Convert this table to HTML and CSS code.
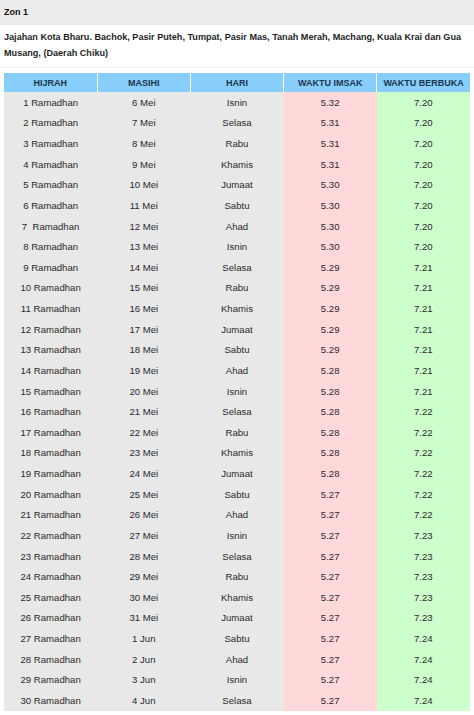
FILE: index.html
```html
<!DOCTYPE html>
<html>
<head>
<meta charset="utf-8">
<link rel="stylesheet" href="styles.css">
</head>
<body>
<div class="zone-title">Zon 1</div>
<div class="zone-desc">Jajahan Kota Bharu. Bachok, Pasir Puteh, Tumpat, Pasir Mas, Tanah Merah, Machang, Kuala Krai dan Gua Musang, (Daerah Chiku)</div>
<table class="jadual">
<thead>
<tr><th>HIJRAH</th><th>MASIHI</th><th>HARI</th><th>WAKTU IMSAK</th><th>WAKTU BERBUKA</th></tr>
</thead>
<tbody>
<tr><td>1 Ramadhan</td><td>6 Mei</td><td>Isnin</td><td class="imsak">5.32</td><td class="buka">7.20</td></tr>
<tr><td>2 Ramadhan</td><td>7 Mei</td><td>Selasa</td><td class="imsak">5.31</td><td class="buka">7.20</td></tr>
<tr><td>3 Ramadhan</td><td>8 Mei</td><td>Rabu</td><td class="imsak">5.31</td><td class="buka">7.20</td></tr>
<tr><td>4 Ramadhan</td><td>9 Mei</td><td>Khamis</td><td class="imsak">5.31</td><td class="buka">7.20</td></tr>
<tr><td>5 Ramadhan</td><td>10 Mei</td><td>Jumaat</td><td class="imsak">5.30</td><td class="buka">7.20</td></tr>
<tr><td>6 Ramadhan</td><td>11 Mei</td><td>Sabtu</td><td class="imsak">5.30</td><td class="buka">7.20</td></tr>
<tr><td>7 &nbsp;Ramadhan</td><td>12 Mei</td><td>Ahad</td><td class="imsak">5.30</td><td class="buka">7.20</td></tr>
<tr><td>8 Ramadhan</td><td>13 Mei</td><td>Isnin</td><td class="imsak">5.30</td><td class="buka">7.20</td></tr>
<tr><td>9 Ramadhan</td><td>14 Mei</td><td>Selasa</td><td class="imsak">5.29</td><td class="buka">7.21</td></tr>
<tr><td>10 Ramadhan</td><td>15 Mei</td><td>Rabu</td><td class="imsak">5.29</td><td class="buka">7.21</td></tr>
<tr><td>11 Ramadhan</td><td>16 Mei</td><td>Khamis</td><td class="imsak">5.29</td><td class="buka">7.21</td></tr>
<tr><td>12 Ramadhan</td><td>17 Mei</td><td>Jumaat</td><td class="imsak">5.29</td><td class="buka">7.21</td></tr>
<tr><td>13 Ramadhan</td><td>18 Mei</td><td>Sabtu</td><td class="imsak">5.29</td><td class="buka">7.21</td></tr>
<tr><td>14 Ramadhan</td><td>19 Mei</td><td>Ahad</td><td class="imsak">5.28</td><td class="buka">7.21</td></tr>
<tr><td>15 Ramadhan</td><td>20 Mei</td><td>Isnin</td><td class="imsak">5.28</td><td class="buka">7.21</td></tr>
<tr><td>16 Ramadhan</td><td>21 Mei</td><td>Selasa</td><td class="imsak">5.28</td><td class="buka">7.22</td></tr>
<tr><td>17 Ramadhan</td><td>22 Mei</td><td>Rabu</td><td class="imsak">5.28</td><td class="buka">7.22</td></tr>
<tr><td>18 Ramadhan</td><td>23 Mei</td><td>Khamis</td><td class="imsak">5.28</td><td class="buka">7.22</td></tr>
<tr><td>19 Ramadhan</td><td>24 Mei</td><td>Jumaat</td><td class="imsak">5.28</td><td class="buka">7.22</td></tr>
<tr><td>20 Ramadhan</td><td>25 Mei</td><td>Sabtu</td><td class="imsak">5.27</td><td class="buka">7.22</td></tr>
<tr><td>21 Ramadhan</td><td>26 Mei</td><td>Ahad</td><td class="imsak">5.27</td><td class="buka">7.22</td></tr>
<tr><td>22 Ramadhan</td><td>27 Mei</td><td>Isnin</td><td class="imsak">5.27</td><td class="buka">7.23</td></tr>
<tr><td>23 Ramadhan</td><td>28 Mei</td><td>Selasa</td><td class="imsak">5.27</td><td class="buka">7.23</td></tr>
<tr><td>24 Ramadhan</td><td>29 Mei</td><td>Rabu</td><td class="imsak">5.27</td><td class="buka">7.23</td></tr>
<tr><td>25 Ramadhan</td><td>30 Mei</td><td>Khamis</td><td class="imsak">5.27</td><td class="buka">7.23</td></tr>
<tr><td>26 Ramadhan</td><td>31 Mei</td><td>Jumaat</td><td class="imsak">5.27</td><td class="buka">7.23</td></tr>
<tr><td>27 Ramadhan</td><td>1 Jun</td><td>Sabtu</td><td class="imsak">5.27</td><td class="buka">7.24</td></tr>
<tr><td>28 Ramadhan</td><td>2 Jun</td><td>Ahad</td><td class="imsak">5.27</td><td class="buka">7.24</td></tr>
<tr><td>29 Ramadhan</td><td>3 Jun</td><td>Isnin</td><td class="imsak">5.27</td><td class="buka">7.24</td></tr>
<tr><td>30 Ramadhan</td><td>4 Jun</td><td>Selasa</td><td class="imsak">5.27</td><td class="buka">7.24</td></tr>
</tbody>
</table>
</body>
</html>
```

FILE: styles.css
```css
html, body {
  margin: 0;
  padding: 0;
  background: #ffffff;
  font-family: "Liberation Sans", Arial, sans-serif;
  color: #222;
}

.zone-title {
  background: #ececec;
  height: 25px;
  line-height: 25px;
  padding-left: 4px;
  font-size: 9px;
  font-weight: bold;
  color: #111;
}

.zone-desc {
  padding: 4px 4px 6px 4px;
  font-size: 9.1px;
  font-weight: bold;
  line-height: 16px;
  color: #1e1e1e;
  border-bottom: 1px solid #f2f2f2;
}

.jadual {
  margin: 5px 0 0 4px;
  width: 466px;
  border-collapse: collapse;
  table-layout: fixed;
  font-size: 9.6px;
}

.jadual th {
  background: #87cefa;
  color: #1c3550;
  font-size: 9px;
  font-weight: bold;
  height: 19px;
  padding: 0;
  text-align: center;
  border-left: 1px solid #ffffff;
  border-right: 1px solid #ffffff;
}

.jadual th:first-child { border-left: none; }
.jadual th:last-child { border-right: none; }

.jadual td {
  background: #e8e8e8;
  height: 20.63px;
  padding: 0;
  text-align: center;
  color: #2a2a2a;
}

.jadual td.imsak { background: #ffd9d9; }
.jadual td.buka { background: #ccffcc; }
```
